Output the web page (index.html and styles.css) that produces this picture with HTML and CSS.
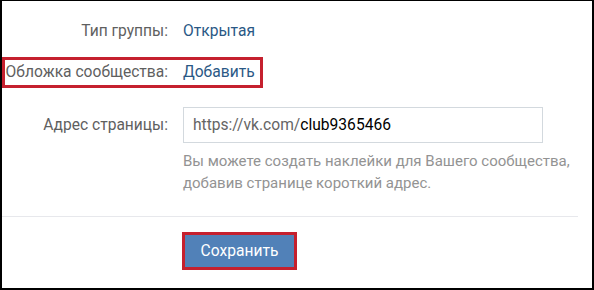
FILE: index.html
```html
<!DOCTYPE html>
<html lang="ru">
<head>
<meta charset="utf-8">
<link rel="stylesheet" href="styles.css">
</head>
<body>
<div class="frame">
  <div class="row row-type">
    <div class="label">Тип группы:</div>
    <div class="value">Открытая</div>
  </div>
  <div class="row highlight">
    <div class="label">Обложка сообщества:</div>
    <div class="value">Добавить</div>
  </div>
  <div class="row row-address">
    <div class="label">Адрес страницы:</div>
    <div class="field"><span class="prefix">https://vk.com/</span><span class="slug">club9365466</span></div>
  </div>
  <div class="hint">Вы можете создать наклейки для Вашего сообщества,<br>добавив странице короткий адрес.</div>
  <div class="separator"></div>
  <div class="actions">
    <div class="btn-wrap"><button class="btn">Сохранить</button></div>
  </div>
</div>
</body>
</html>
```

FILE: styles.css
```css
* { box-sizing: border-box; }
html, body { margin: 0; padding: 0; background: #fff; }
body { font-family: Roboto, "Noto Sans", sans-serif; font-size: 15px; }
.frame {
  width: 594px;
  height: 290px;
  border-top: 1px solid #000;
  border-left: 2px solid #000;
  border-right: 2px solid #000;
  border-bottom: 2px solid #000;
  padding-top: 20px;
}
.row { display: flex; align-items: center; line-height: 20px; font-size: 15.6px; }
.label { width: 166px; text-align: right; color: #5f5f5f; flex: none; }
.value { margin-left: 15px; color: #2a5885; }
.highlight {
  margin-top: 16px;
  width: 261px;
  border: 3px solid #c5202e;
  padding: 2px 0 3px 0;
}
.highlight .label { width: 163px; }
.row-address { margin-top: 19px; }
.field {
  margin-left: 15px;
  width: 360px;
  height: 36px;
  border: 1px solid #d3d9de;
  padding-left: 9px;
  display: flex;
  align-items: center;
}
.prefix { color: #656565; }
.slug { color: #000; }
.hint {
  margin-left: 181px;
  margin-top: 7px;
  line-height: 22px;
  color: #939393;
}
.separator {
  margin-top: 22px;
  width: 576px;
  height: 1px;
  background: #e7e8ec;
}
.actions { margin-top: 15px; padding-left: 180px; }
.btn-wrap { display: inline-block; border: 3px solid #c5202e; }
.btn {
  display: block;
  width: 109px;
  height: 32px;
  border: 0;
  margin: 0;
  background: #5181b8;
  color: #fff;
  font-family: Roboto, "Noto Sans", sans-serif;
  font-size: 15.6px;
  padding: 0;
}
```
